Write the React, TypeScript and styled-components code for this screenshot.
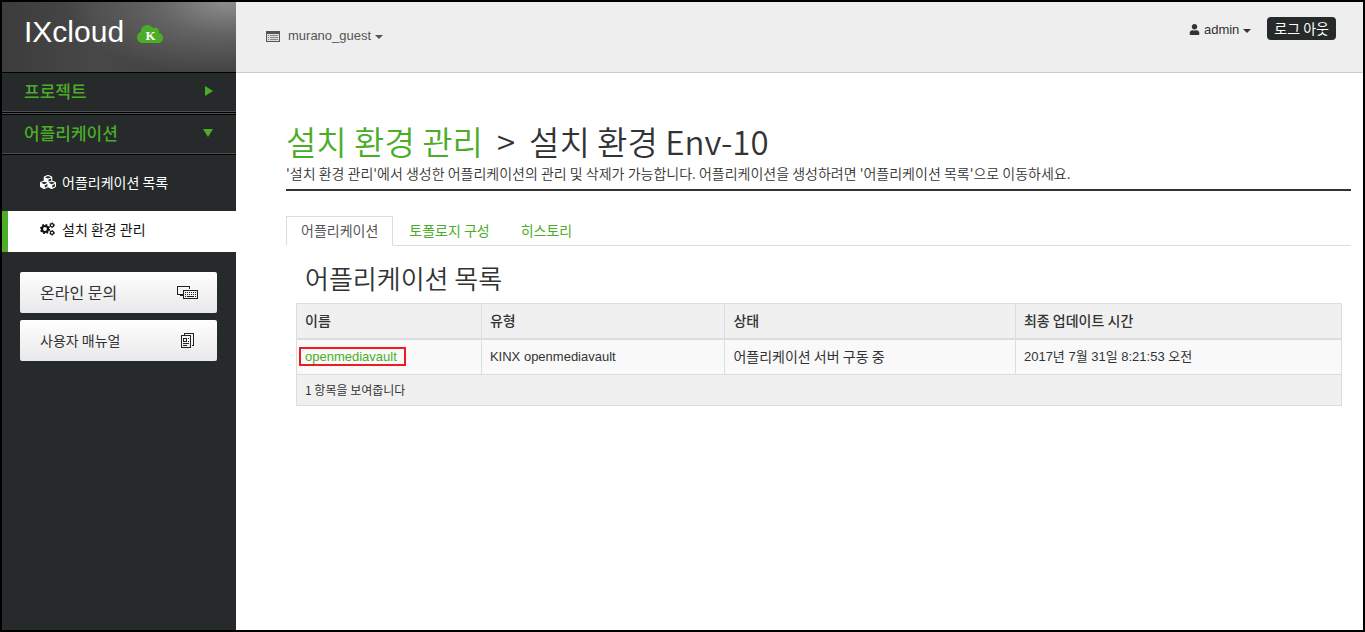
import React from "react";
import styled, { createGlobalStyle } from "styled-components";
import { FaCloud, FaCubes, FaUser } from "react-icons/fa";

const green = "#4bad27";
const dark = "#262a2b";
const line = "#dddddd";
const korean = `"Noto Sans CJK KR", sans-serif`;
const latin = `"Liberation Sans", "Noto Sans CJK KR", sans-serif`;

const GlobalStyle = createGlobalStyle`
  *, *::before, *::after { box-sizing: border-box; }
  body { margin: 0; background: #fff; color: #333; font: 400 14px/20px ${korean}; }
  h1, h2, p { margin: 0; padding: 0; font-weight: 350; }
  a { color: ${green}; text-decoration: none; }
  button { font: inherit; color: inherit; border: 0; background: none; padding: 0; cursor: pointer; }
  svg { display: block; flex: none; }
`;

const Frame = styled.div`
  display: flex;
  min-height: 100vh;
  border: 2px solid #000;
`;

const Sidebar = styled.aside`
  flex: none;
  width: 234px;
  background: ${dark};
`;

const Brand = styled.a`
  display: flex;
  align-items: flex-start;
  gap: 13px;
  height: 71px;
  padding: 12px 22px;
  border-bottom: 1px solid #000;
  background:
    radial-gradient(ellipse 160px 75px at 96% 0, #8d8d8d, rgba(120, 120, 120, 0.6) 45%, transparent),
    linear-gradient(90deg, #3c3c3c, #484848 40%, #3e3e3e);
  color: #fff;
  font: 400 30px/36px "Liberation Sans", sans-serif;
`;

const CloudMark = styled.span`
  position: relative;
  margin-top: 7px;
  color: ${green};
`;

const CloudLetter = styled.span`
  position: absolute;
  inset: 9px 0 0 1px;
  text-align: center;
  color: #fff;
  font: 700 13px/12px "Liberation Serif", serif;
`;

const Section = styled.button`
  display: flex;
  align-items: center;
  justify-content: space-between;
  width: 100%;
  height: 40px;
  padding: 0 23px 3px 22px;
  border-bottom: 1px solid #000;
  box-shadow: inset 0 -1px #4a4d4e;
  color: ${green};
  font: 500 17px/24px ${korean};
`;

const SectionGap = styled.div`
  height: 2px;
  border-top: 1px solid #4a4d4e;
  border-bottom: 1px solid #000;
`;

const SubItem = styled.a<{ $active?: boolean }>`
  display: flex;
  align-items: center;
  gap: 6px;
  height: ${(p) => (p.$active ? 41 : 56)}px;
  padding: 0 0 ${(p) => (p.$active ? 6 : 2)}px 32px;
  border-left: 6px solid ${(p) => (p.$active ? green : "transparent")};
  background: ${(p) => (p.$active ? "#fff" : "transparent")};
  color: ${(p) => (p.$active ? "#111" : "#fff")};
`;

const SubIcon = styled.span`
  width: 16px;
`;

const HelpLinks = styled.div`
  display: flex;
  flex-direction: column;
  gap: 7px;
  padding: 20px 19px 20px 18px;
`;

const HelpLink = styled.a<{ $large?: boolean }>`
  display: flex;
  align-items: center;
  justify-content: space-between;
  height: 41px;
  padding: 0 19px 2px 20px;
  border-radius: 2px;
  background: linear-gradient(#fff, #e8e8ea);
  color: #333;
  font-size: ${(p) => (p.$large ? 16 : 14)}px;
`;

const IconSlot = styled.span`
  display: flex;
  justify-content: center;
  width: 22px;
  padding-top: 2px;
`;

const Main = styled.div`
  flex: 1;
  min-width: 0;
`;

const TopBar = styled.header`
  display: flex;
  justify-content: space-between;
  height: 71px;
  padding: 0 27px 0 30px;
  border-bottom: 1px solid #ccc;
  background: #eee;
  font: 400 13px/20px ${latin};
`;

const MenuButton = styled.button`
  display: flex;
  align-items: center;
  gap: 4px;
`;

const ProjectMenu = styled(MenuButton)`
  align-self: flex-start;
  margin-top: 24px;
  color: #555;

  svg { margin-right: 4px; }
`;

const Account = styled.div`
  display: flex;
  align-items: center;
  align-self: flex-start;
  gap: 16px;
  margin-top: 15px;
`;

const UserMenu = styled(MenuButton)`
  padding-top: 2px;
`;

const Caret = styled.span`
  border: 4px solid transparent;
  border-top-color: currentColor;
  border-bottom: 0;
  margin-top: 2px;
`;

const Logout = styled.button`
  height: 23px;
  padding: 0 7px 2px;
  border-radius: 4px;
  background: ${dark};
  color: #fff;
  font: 400 14px/20px ${korean};
`;

const Content = styled.main`
  padding: 47px 12px 40px 50px;
`;

const Title = styled.h1`
  display: flex;
  gap: 14px;
  font-size: 33px;
  line-height: 42px;
`;

const Intro = styled.p`
  padding: 0 0 5px;
  border-bottom: 2px solid #333;
  line-height: 22px;
`;

const Tabs = styled.nav`
  display: flex;
  gap: 1px;
  margin-top: 25px;
  border-bottom: 1px solid ${line};
`;

const Tab = styled.a<{ $active?: boolean }>`
  margin-bottom: -1px;
  padding: 3px 14px 5px;
  border: 1px solid ${(p) => (p.$active ? line : "transparent")};
  border-bottom-color: ${(p) => (p.$active ? "#fff" : "transparent")};
  color: ${(p) => (p.$active ? "#555" : green)};
`;

const Panel = styled.section`
  padding: 14px 9px 0 10px;
`;

const PanelTitle = styled.h2`
  padding-left: 9px;
  margin-bottom: 7px;
  font-size: 26px;
  line-height: 36px;
`;

const Grid = styled.table`
  width: 100%;
  table-layout: fixed;
  border-collapse: collapse;

  th, td {
    padding: 0 8px 2px;
    border: 1px solid ${line};
    text-align: left;
  }
  th {
    height: 35px;
    border-bottom-width: 2px;
    background: #f0f0f0;
    font-weight: 500;
  }
  tbody td {
    height: 36px;
    background: #f9f9f9;
  }
  tfoot td {
    height: 31px;
    padding-bottom: 0;
    background: #f0f0f0;
    font-size: 12px;
  }
`;

const Col = styled.col<{ $share: string }>`
  width: ${(p) => p.$share};
`;

const LatinCell = styled.td`
  font: 400 13px/20px ${latin};

  tbody && { padding-bottom: 0; }
`;

const Marked = styled.a`
  display: inline-block;
  margin-left: -6px;
  padding: 0 7px 0 4px;
  border: 2px solid #ed1c24;
  line-height: 15px;
`;

const RightArrow = () => (
  <svg width="8" height="10" viewBox="0 0 8 10" fill={green}><path d="M0 0L8 5L0 10Z" /></svg>
);
const DownArrow = () => (
  <svg width="10" height="8" viewBox="0 0 10 8" fill={green}><path d="M0 0H10L5 8Z" /></svg>
);
const GearsIcon = () => (
  <svg width="15" height="14" viewBox="0 0 15 14" fill="none" stroke="currentColor">
    <circle cx="5" cy="7" r="3" strokeWidth="2.2" />
    <circle cx="5" cy="7" r="4.4" strokeWidth="1.4" strokeDasharray="1.73 1.73" />
    <circle cx="12" cy="3.2" r="1.6" strokeWidth="1.2" />
    <circle cx="12" cy="3.2" r="2.4" strokeWidth="0.8" strokeDasharray="1.26 1.26" />
    <circle cx="12" cy="10.8" r="1.6" strokeWidth="1.2" />
    <circle cx="12" cy="10.8" r="2.4" strokeWidth="0.8" strokeDasharray="1.26 1.26" />
  </svg>
);
const ListIcon = () => (
  <svg width="14" height="11" viewBox="0 0 14 11" shapeRendering="crispEdges">
    <path fill="#ddd" d="M1 1h12v9H1z" />
    <path fill="#555" fillRule="evenodd" d="M0 0h14v11H0zM1 3v7h12V3z" />
    <path fill="#888" d="M2 4h1v1H2zM4 4h8v1H4zM2 6h1v1H2zM4 6h8v1H4zM2 8h1v1H2zM4 8h8v1H4z" />
  </svg>
);
const KeyboardIcon = () => (
  <svg width="21" height="13" viewBox="0 0 21 13" shapeRendering="crispEdges" fill="#222">
    <path d="M0 0h13v3h-1V1H1v7h5v1H0z" />
    <path d="M0 8h6v1H0zM3 9h3v1H3z" />
    <path fillRule="evenodd" d="M6 4h15v9H6zM7 5v7h13V5z" />
    <path d="M8 6h1v1H8zM10 6h1v1h-1zM12 6h1v1h-1zM14 6h1v1h-1zM16 6h1v1h-1zM18 6h1v1h-1zM8 8h1v1H8zM10 8h1v1h-1zM12 8h1v1h-1zM14 8h1v1h-1zM16 8h1v1h-1zM18 8h1v1h-1zM8 10h1v1H8zM10 10h7v1h-7zM18 10h1v1h-1z" />
  </svg>
);
const ManualIcon = () => (
  <svg width="13" height="15" viewBox="0 0 13 15" shapeRendering="crispEdges" fill="#222">
    <path d="M3 0h10v13h-2v-1h1V1H4v1H3z" />
    <path fillRule="evenodd" d="M0 2h10v13H0zM1 3v11h8V3z" />
    <path fillRule="evenodd" d="M2 5h4v4H2zM3 6v2h2V6z" />
    <path d="M7 5h1v1H7zM7 8h1v1H7zM2 10h6v1H2zM2 12h4v1H2z" />
  </svg>
);

export default function App() {
  return (
    <>
      <GlobalStyle />
      <Frame>
        <Sidebar>
          <Brand href="#">
            IXcloud
            <CloudMark>
              <FaCloud size={26} />
              <CloudLetter>K</CloudLetter>
            </CloudMark>
          </Brand>
          <Section>프로젝트<RightArrow /></Section>
          <SectionGap />
          <Section>어플리케이션<DownArrow /></Section>
          <nav>
            <SubItem href="#"><SubIcon><FaCubes size={16} /></SubIcon>어플리케이션 목록</SubItem>
            <SubItem href="#" $active><SubIcon><GearsIcon /></SubIcon>설치 환경 관리</SubItem>
          </nav>
          <HelpLinks>
            <HelpLink href="#" $large>온라인 문의<IconSlot><KeyboardIcon /></IconSlot></HelpLink>
            <HelpLink href="#">사용자 매뉴얼<IconSlot><ManualIcon /></IconSlot></HelpLink>
          </HelpLinks>
        </Sidebar>
        <Main>
          <TopBar>
            <ProjectMenu><ListIcon />murano_guest<Caret /></ProjectMenu>
            <Account>
              <UserMenu><FaUser size={11} />admin<Caret /></UserMenu>
              <Logout>로그 아웃</Logout>
            </Account>
          </TopBar>
          <Content>
            <Title><a href="#">설치 환경 관리</a><span>&gt;</span><span>설치 환경 Env-10</span></Title>
            <Intro>'설치 환경 관리'에서 생성한 어플리케이션의 관리 및 삭제가 가능합니다. 어플리케이션을 생성하려면 '어플리케이션 목록'으로 이동하세요.</Intro>
            <Tabs>
              <Tab href="#" $active>어플리케이션</Tab>
              <Tab href="#">토폴로지 구성</Tab>
              <Tab href="#">히스토리</Tab>
            </Tabs>
            <Panel>
              <PanelTitle>어플리케이션 목록</PanelTitle>
              <Grid>
                <colgroup>
                  <Col $share="17.7%" />
                  <Col $share="23.3%" />
                  <Col $share="27.8%" />
                  <Col $share="31.2%" />
                </colgroup>
                <thead>
                  <tr><th>이름</th><th>유형</th><th>상태</th><th>최종 업데이트 시간</th></tr>
                </thead>
                <tbody>
                  <tr>
                    <LatinCell><Marked href="#">openmediavault</Marked></LatinCell>
                    <LatinCell>KINX openmediavault</LatinCell>
                    <td>어플리케이션 서버 구동 중</td>
                    <LatinCell>2017년 7월 31일 8:21:53 오전</LatinCell>
                  </tr>
                </tbody>
                <tfoot>
                  <tr><td colSpan={4}>1 항목을 보여줍니다</td></tr>
                </tfoot>
              </Grid>
            </Panel>
          </Content>
        </Main>
      </Frame>
    </>
  );
}
